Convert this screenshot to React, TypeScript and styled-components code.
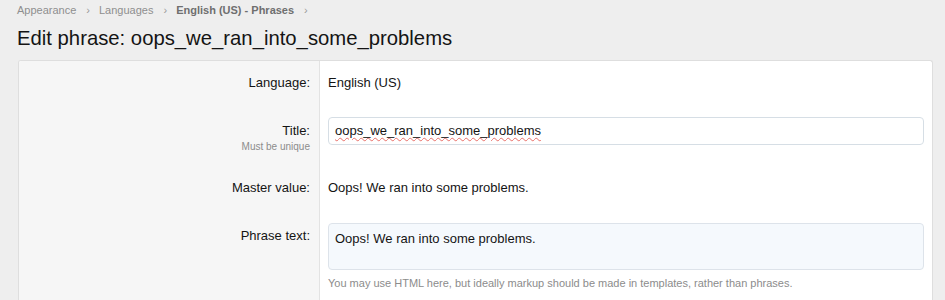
import styled, { createGlobalStyle } from "styled-components";

const GlobalStyle = createGlobalStyle`
  body {
    margin: 0;
    background: #eeeeee;
    font-family: "Liberation Sans", Arial, sans-serif;
    color: #141414;
  }
`;

const crumbs = ["Appearance", "Languages", "English (US) - Phrases"];

export default function App() {
  return (
    <>
      <GlobalStyle />
      <Page>
        <Breadcrumbs>
          {crumbs.map((c, i) => (
            <Crumb key={c} $current={i === crumbs.length - 1}>
              {c}
              <Chevron>›</Chevron>
            </Crumb>
          ))}
        </Breadcrumbs>
        <PageTitle>Edit phrase: oops_we_ran_into_some_problems</PageTitle>
        <Card>
          <Row>
            <Label>Language:</Label>
            <Value>English (US)</Value>
          </Row>
          <Row>
            <Label $input>
              Title:
              <LabelHint>Must be unique</LabelHint>
            </Label>
            <Value>
              <TextInput>
                <Misspelled>oops_we_ran_into_some_problems</Misspelled>
              </TextInput>
            </Value>
          </Row>
          <Row>
            <Label>Master value:</Label>
            <Value>Oops! We ran into some problems.</Value>
          </Row>
          <Row>
            <Label $input>Phrase text:</Label>
            <Value>
              <TextArea>Oops! We ran into some problems.</TextArea>
              <Explain>
                You may use HTML here, but ideally markup should be made in
                templates, rather than phrases.
              </Explain>
            </Value>
          </Row>
        </Card>
      </Page>
    </>
  );
}

const Page = styled.div`
  padding: 3px 13px 0 17px;
`;

const Breadcrumbs = styled.div`
  display: flex;
  font-size: 11px;
  line-height: 14px;
  height: 14px;
`;

const Crumb = styled.span<{ $current?: boolean }>`
  color: ${(p) => (p.$current ? "#6f6f6f" : "#8e8e8e")};
  font-weight: ${(p) => (p.$current ? "bold" : "normal")};
`;

const Chevron = styled.span`
  display: inline-block;
  margin: 0 9px 0 10px;
  color: #9a9a9a;
  font-weight: normal;
`;

const PageTitle = styled.h1`
  margin: 9px 0 0;
  font-size: 20.3px;
  line-height: 24px;
  font-weight: normal;
  color: #141414;
`;

const Card = styled.div`
  margin-top: 10px;
  margin-left: 1px;
  width: 913px;
  background: #ffffff;
  border: 1px solid #dedede;
  border-bottom: none;
  border-radius: 3px 3px 0 0;
  overflow: hidden;
`;

const Row = styled.div`
  display: grid;
  grid-template-columns: 301px 1fr;
`;

const Label = styled.div<{ $input?: boolean }>`
  background: #f6f6f6;
  border-right: 1px solid #e3e3e3;
  padding: ${(p) => (p.$input ? "17px" : "13px")} 9px 13px 0;
  text-align: right;
  font-size: 13px;
  line-height: 18px;
  color: #141414;
`;

const LabelHint = styled.div`
  font-size: 10px;
  line-height: 13px;
  color: #8c8c8c;
`;

const Value = styled.div`
  padding: 13px 8px 13px 8px;
  font-size: 13px;
  line-height: 18px;
`;

const TextInput = styled.div`
  box-sizing: border-box;
  height: 28px;
  margin-top: -1px;
  padding: 4px 6px;
  border: 1px solid #d6dee5;
  border-radius: 4px;
  background: #ffffff;
  font-size: 13px;
  line-height: 18px;
`;

const Misspelled = styled.span`
  text-decoration: underline wavy #e8706a;
  text-decoration-thickness: 1px;
  text-underline-offset: 2px;
`;

const TextArea = styled.div`
  box-sizing: border-box;
  height: 47px;
  padding: 6px 6px;
  border: 1px solid #dde3ea;
  border-radius: 4px;
  background: #f5f9fd;
  font-size: 13px;
  line-height: 18px;
`;

const Explain = styled.div`
  margin-top: 6px;
  font-size: 11px;
  line-height: 14px;
  color: #8c8c8c;
`;
